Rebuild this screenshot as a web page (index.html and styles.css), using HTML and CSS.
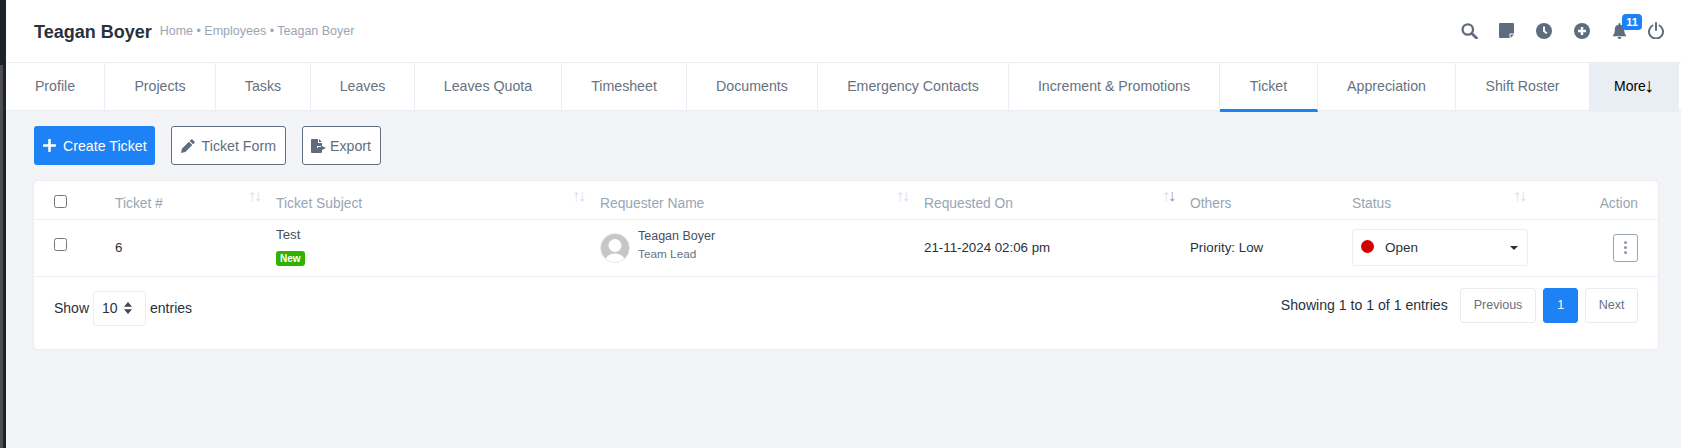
FILE: index.html

```html
<!DOCTYPE html>
<html lang="en">
<head>
    <meta charset="UTF-8">
    <title>Teagan Boyer - Ticket</title>
    <link rel="stylesheet" href="styles.css">
</head>
<body>
    <div class="side-strip"></div>
    <div class="main">
        <div class="header">
            <div class="page-title">
                <h1>Teagan Boyer</h1>
                <span class="crumbs">Home &bull; Employees &bull; Teagan Boyer</span>
            </div>
            <div class="header-icons">
                <svg class="icon-search" width="17" height="16" viewBox="0 0 17 16"><circle cx="6.800" cy="6.500" r="5.200" fill="none" stroke="#5f6b7e" stroke-width="2.300"/><path d="M10.800 10.500l4.700 4.500" stroke="#5f6b7e" stroke-width="2.800" stroke-linecap="round"/></svg>
                <svg width="15" height="15" viewBox="0 0 15 15"><path d="M1 0h13a1 1 0 0 1 1 1v9.500h-4.500V15H1a1 1 0 0 1-1-1V1a1 1 0 0 1 1-1zM11.500 11.500H15L11.500 15z" fill="#5f6b7e"/></svg>
                <svg width="16" height="16" viewBox="0 0 16 16"><circle cx="8" cy="8" r="8" fill="#5f6b7e"/><path d="M8 3.500V8l2.800 2.400" fill="none" stroke="#fff" stroke-width="1.900"/></svg>
                <svg width="16" height="16" viewBox="0 0 16 16"><circle cx="8" cy="8" r="8" fill="#5f6b7e"/><path d="M8 4v8M4 8h8" stroke="#fff" stroke-width="2.400"/></svg>
                <span class="bell">
                    <svg width="15" height="16" viewBox="0 0 15 17"><path d="M7.500 0a1 1 0 0 1 1 1v.9A5 5 0 0 1 12.500 7c0 4 1 5.300 2.200 6.500V14H.3v-.5C1.500 12.300 2.500 11 2.500 7a5 5 0 0 1 4-5.100V1a1 1 0 0 1 1-1zM5.500 15h4a2 2 0 0 1-4 0z" fill="#5f6b7e"/></svg>
                    <span class="badge">11</span>
                </span>
                <svg class="icon-power" width="16" height="17" viewBox="0 0 16 17"><path d="M4.500 3.500a7 7 0 1 0 7 0" fill="none" stroke="#5f6b7e" stroke-width="2" stroke-linecap="round"/><path d="M8 1v7" stroke="#5f6b7e" stroke-width="2" stroke-linecap="round"/></svg>
            </div>
        </div>

        <div class="tabs">
            <a class="tab">Profile</a>
            <a class="tab">Projects</a>
            <a class="tab">Tasks</a>
            <a class="tab">Leaves</a>
            <a class="tab">Leaves Quota</a>
            <a class="tab">Timesheet</a>
            <a class="tab">Documents</a>
            <a class="tab">Emergency Contacts</a>
            <a class="tab">Increment &amp; Promotions</a>
            <a class="tab active">Ticket</a>
            <a class="tab">Appreciation</a>
            <a class="tab">Shift Roster</a>
            <a class="tab more">More<span class="more-arrow">&#8595;</span></a>
        </div>

        <div class="content">
            <div class="actions">
                <a class="btn btn-primary">
                    <svg width="13" height="13" viewBox="0 0 13 13"><path d="M6.500 1v11M1 6.500h11" stroke="#fff" stroke-width="2.600" stroke-linecap="round"/></svg>
                    Create Ticket
                </a>
                <a class="btn btn-outline">
                    <svg width="14" height="14" viewBox="0 0 14 14"><path d="M10 .6a1 1 0 0 1 1.400 0l2 2a1 1 0 0 1 0 1.400l-1.300 1.300-3.400-3.400zM7.900 2.700l3.400 3.400-7 7L0 14l.9-4.300z" fill="#5f6b7e"/></svg>
                    Ticket Form
                </a>
                <a class="btn btn-outline btn-export">
                    <svg width="16" height="14" viewBox="0 0 16 14"><path d="M1 0h6v4h4v3H6v2h5v4a1 1 0 0 1-1 1H1a1 1 0 0 1-1-1V1a1 1 0 0 1 1-1zM8 0l3 3H8zM10 6.500l5 2.500-5 2.500V10H7V8h3z" fill="#5f6b7e"/></svg>
                    Export
                </a>
            </div>

            <div class="card">
                <table class="ticket-table">
                    <colgroup>
                        <col class="col-check"><col class="col-num"><col class="col-subject"><col class="col-req">
                        <col class="col-on"><col class="col-others"><col class="col-status"><col class="col-action">
                    </colgroup>
                    <thead>
                        <tr>
                            <th><span class="check"></span></th>
                            <th class="sortable">Ticket #<span class="sort">&#8593;&#8595;</span></th>
                            <th class="sortable">Ticket Subject<span class="sort">&#8593;&#8595;</span></th>
                            <th class="sortable">Requester Name<span class="sort">&#8593;&#8595;</span></th>
                            <th class="sortable">Requested On<span class="sort sort-desc">&#8593;<b>&#8595;</b></span></th>
                            <th>Others</th>
                            <th class="sortable">Status<span class="sort">&#8593;&#8595;</span></th>
                            <th class="right">Action</th>
                        </tr>
                    </thead>
                    <tbody>
                        <tr>
                            <td><span class="check"></span></td>
                            <td>6</td>
                            <td class="subject">
                                <div class="subject-name">Test</div>
                                <span class="tag-new">New</span>
                            </td>
                            <td>
                                <div class="user">
                                    <svg class="avatar" width="30" height="30" viewBox="0 0 30 30"><defs><clipPath id="av"><circle cx="15" cy="15" r="14.500"/></clipPath></defs><circle cx="15" cy="15" r="14.500" fill="#c6c6c6"/><g clip-path="url(#av)" fill="#fff"><circle cx="15" cy="12.500" r="6.500"/><ellipse cx="15" cy="28" rx="10" ry="7.500"/></g><circle cx="15" cy="15" r="14.500" fill="none" stroke="#e8eaee"/></svg>
                                    <div class="user-info">
                                        <div class="user-name">Teagan Boyer</div>
                                        <div class="user-role">Team Lead</div>
                                    </div>
                                </div>
                            </td>
                            <td>21-11-2024 02:06 pm</td>
                            <td>Priority: Low</td>
                            <td>
                                <div class="status-select">
                                    <span class="dot"></span>
                                    <span class="status-text">Open</span>
                                    <span class="caret"></span>
                                </div>
                            </td>
                            <td class="right">
                                <span class="dots-btn"><i></i><i></i><i></i></span>
                            </td>
                        </tr>
                    </tbody>
                </table>
                <div class="table-foot">
                    <div class="length">
                        Show
                        <span class="length-select">10
                            <svg width="8" height="12" viewBox="0 0 8 12"><path d="M4 0l4 4.800H0zM4 12L0 7.200h8z" fill="#3f4654"/></svg>
                        </span>
                        entries
                    </div>
                    <div class="paging">
                        <span class="paging-info">Showing 1 to 1 of 1 entries</span>
                        <a class="page-btn">Previous</a>
                        <a class="page-btn current">1</a>
                        <a class="page-btn page-next">Next</a>
                    </div>
                </div>
            </div>
        </div>
    </div>
</body>
</html>
```

FILE: styles.css

```css
* {
    box-sizing: border-box;
}
html, body {
    height: 100%;
}
body {
    margin: 0;
    display: flex;
    font-family: "Liberation Sans", Arial, sans-serif;
    font-size: 13px;
    color: #28313c;
    background-color: #f2f4f7;
    overflow: hidden;
}
.side-strip {
    width: 6px;
    flex-shrink: 0;
    background-color: #1d232b;
    border-left: 3px solid #4d4e4f;
    border-image: linear-gradient(#1d232b 66px, #4d4e4f 66px) 1;
}
.main {
    flex: 1;
    min-width: 0;
}

/* header */
.header {
    height: 62px;
    background-color: #fff;
    display: flex;
    align-items: center;
    justify-content: space-between;
    padding: 0 17px 1px 28px;
}
.page-title {
    display: flex;
    align-items: center;
    gap: 8px;
    padding-top: 4px;
}
.page-title h1 {
    margin: 0;
    font-size: 18px;
    font-weight: bold;
    color: #28313c;
}
.crumbs {
    font-size: 12.500px;
    color: #99a5b5;
    margin-top: -3px;
}
.header-icons {
    display: flex;
    align-items: center;
    gap: 22px;
    color: #5f6b7e;
}
.icon-search {
    margin-right: -1px;
}
.icon-power {
    margin-left: -1px;
}
.bell {
    position: relative;
    display: flex;
}
.badge {
    position: absolute;
    left: 10px;
    top: -9px;
    background-color: #1d82f5;
    color: #fff;
    font-size: 11px;
    font-weight: bold;
    line-height: 16px;
    height: 16px;
    width: 20px;
    text-align: center;
    border-radius: 4px;
}

/* tabs */
.tabs {
    display: grid;
    grid-template-columns: 99px 111px 95px 104px 147px 125px 131px 191px 211px 98px 138px 134px 89px;
    height: 49px;
    background-color: #fff;
    border-top: 1px solid #e8eef3;
    border-bottom: 1px solid #e8eef3;
}
.tab {
    line-height: 46px;
    font-size: 14.200px;
    color: #67727f;
    text-align: center;
    border-right: 1px solid #e8eef3;
    white-space: nowrap;
}
.tab.active {
    border-bottom: 3px solid #1d82f5;
}
.tab.more {
    background-color: #e8eef3;
    color: #000;
    font-size: 14px;
    border-right: none;
    text-align: left;
    padding-left: 24px;
}
.more-arrow {
    font-size: 20px;
    line-height: 1;
    vertical-align: -1px;
    margin-left: -2px;
}

/* buttons */
.content {
    padding: 15px 23px 0 28px;
}
.actions {
    display: flex;
    gap: 16px;
}
.btn {
    height: 39px;
    display: flex;
    align-items: center;
    border-radius: 3px;
    font-size: 14.200px;
    padding: 0 9px;
}
.btn svg {
    margin-right: 7px;
}
.btn-primary {
    background-color: #1d82f5;
    color: #fff;
    padding-right: 8px;
}
.btn-outline {
    border: 1px solid #616e80;
    color: #616e80;
    background-color: #fff;
}
.btn-export {
    padding: 0 9px 0 8px;
}
.btn-export svg {
    margin-right: 3px;
}

/* table */
.card {
    margin-top: 16px;
    height: 168px;
    background-color: #fff;
    border-radius: 4px;
    box-shadow: 0 0 3px rgba(0, 0, 0, 0.08);
}
.ticket-table {
    width: 100%;
    table-layout: fixed;
    border-collapse: collapse;
}
.col-check { width: 81px; }
.col-num { width: 161px; }
.col-subject { width: 324px; }
.col-req { width: 324px; }
.col-on { width: 266px; }
.col-others { width: 162px; }
.col-status { width: 189px; }
.ticket-table th {
    height: 38px;
    padding: 7px 0 0;
    font-size: 13.800px;
    font-weight: normal;
    color: #99a5b5;
    text-align: left;
    border-bottom: 1px solid #eef1f5;
    position: relative;
}
.ticket-table th:first-child,
.ticket-table td:first-child {
    padding-left: 20px;
}
.ticket-table td {
    height: 57px;
    padding: 0;
    font-size: 13.300px;
    border-bottom: 1px solid #eef1f5;
}
.ticket-table .right {
    text-align: right;
    padding-right: 20px;
}
.sort {
    position: absolute;
    right: 16px;
    top: 6px;
    font-size: 16px;
    letter-spacing: -2px;
    color: #d8dde4;
}
.sort-desc b {
    font-weight: normal;
    color: #8d97a6;
}
.check {
    display: block;
    width: 13px;
    height: 13px;
    border: 1px solid #767676;
    border-radius: 2.500px;
    background-color: #fff;
    margin-top: -4px;
}
.ticket-table td .check {
    margin-top: -6px;
}
.ticket-table .subject {
    padding-bottom: 3px;
}
.subject-name {
    color: #4d4f5c;
    margin-bottom: 8px;
}
.tag-new {
    display: inline-block;
    background-color: #2fb200;
    color: #fff;
    font-size: 10px;
    font-weight: bold;
    line-height: 15px;
    height: 15px;
    padding: 0 4px;
    border-radius: 3px;
}
.user {
    display: flex;
    align-items: center;
    gap: 8px;
}
.avatar {
    flex-shrink: 0;
}
.user-info {
    padding-bottom: 6px;
}
.user-name {
    font-size: 12.500px;
    color: #4d4f5c;
    margin-bottom: 4px;
}
.user-role {
    font-size: 11.800px;
    color: #67727f;
}
.status-select {
    width: 176px;
    height: 37px;
    border: 1px solid #e8eef3;
    border-radius: 3px;
    display: flex;
    align-items: center;
    padding: 0 9px 0 8px;
}
.dot {
    width: 13px;
    height: 13px;
    border-radius: 50%;
    background-color: #d30000;
    margin-top: -2px;
}
.status-text {
    margin-left: 11px;
    flex: 1;
    font-size: 13.500px;
    color: #28313c;
}
.caret {
    border-left: 4px solid transparent;
    border-right: 4px solid transparent;
    border-top: 4px solid #28313c;
}
.dots-btn {
    width: 25px;
    height: 28px;
    border: 1px solid #99a5b5;
    border-radius: 3px;
    display: inline-flex;
    flex-direction: column;
    align-items: center;
    justify-content: center;
    gap: 2px;
    vertical-align: middle;
}
.dots-btn i {
    width: 3px;
    height: 3px;
    border-radius: 50%;
    background-color: #8d97a6;
}

/* table footer */
.table-foot {
    display: flex;
    justify-content: space-between;
    padding: 11px 20px 0;
}
.length {
    display: flex;
    align-items: center;
    height: 35px;
    margin-top: 3px;
    font-size: 14px;
    color: #28313c;
}
.length-select {
    width: 53px;
    height: 35px;
    margin: 0 4px 0 4px;
    padding: 0 13px 0 8px;
    border: 1px solid #e8eef3;
    border-radius: 3px;
    display: flex;
    align-items: center;
    justify-content: space-between;
}
.paging {
    display: flex;
    align-items: center;
    gap: 7px;
    height: 35px;
}
.paging-info {
    font-size: 14.100px;
    margin-right: 5px;
}
.page-btn {
    height: 35px;
    line-height: 33px;
    padding: 0 13px;
    font-size: 12.500px;
    color: #67727f;
    border: 1px solid #e8eaee;
    border-radius: 3px;
}
.page-btn.page-next {
    padding: 0 12.500px;
}
.page-btn.current {
    background-color: #1d82f5;
    border-color: #1d82f5;
    color: #fff;
}
```
